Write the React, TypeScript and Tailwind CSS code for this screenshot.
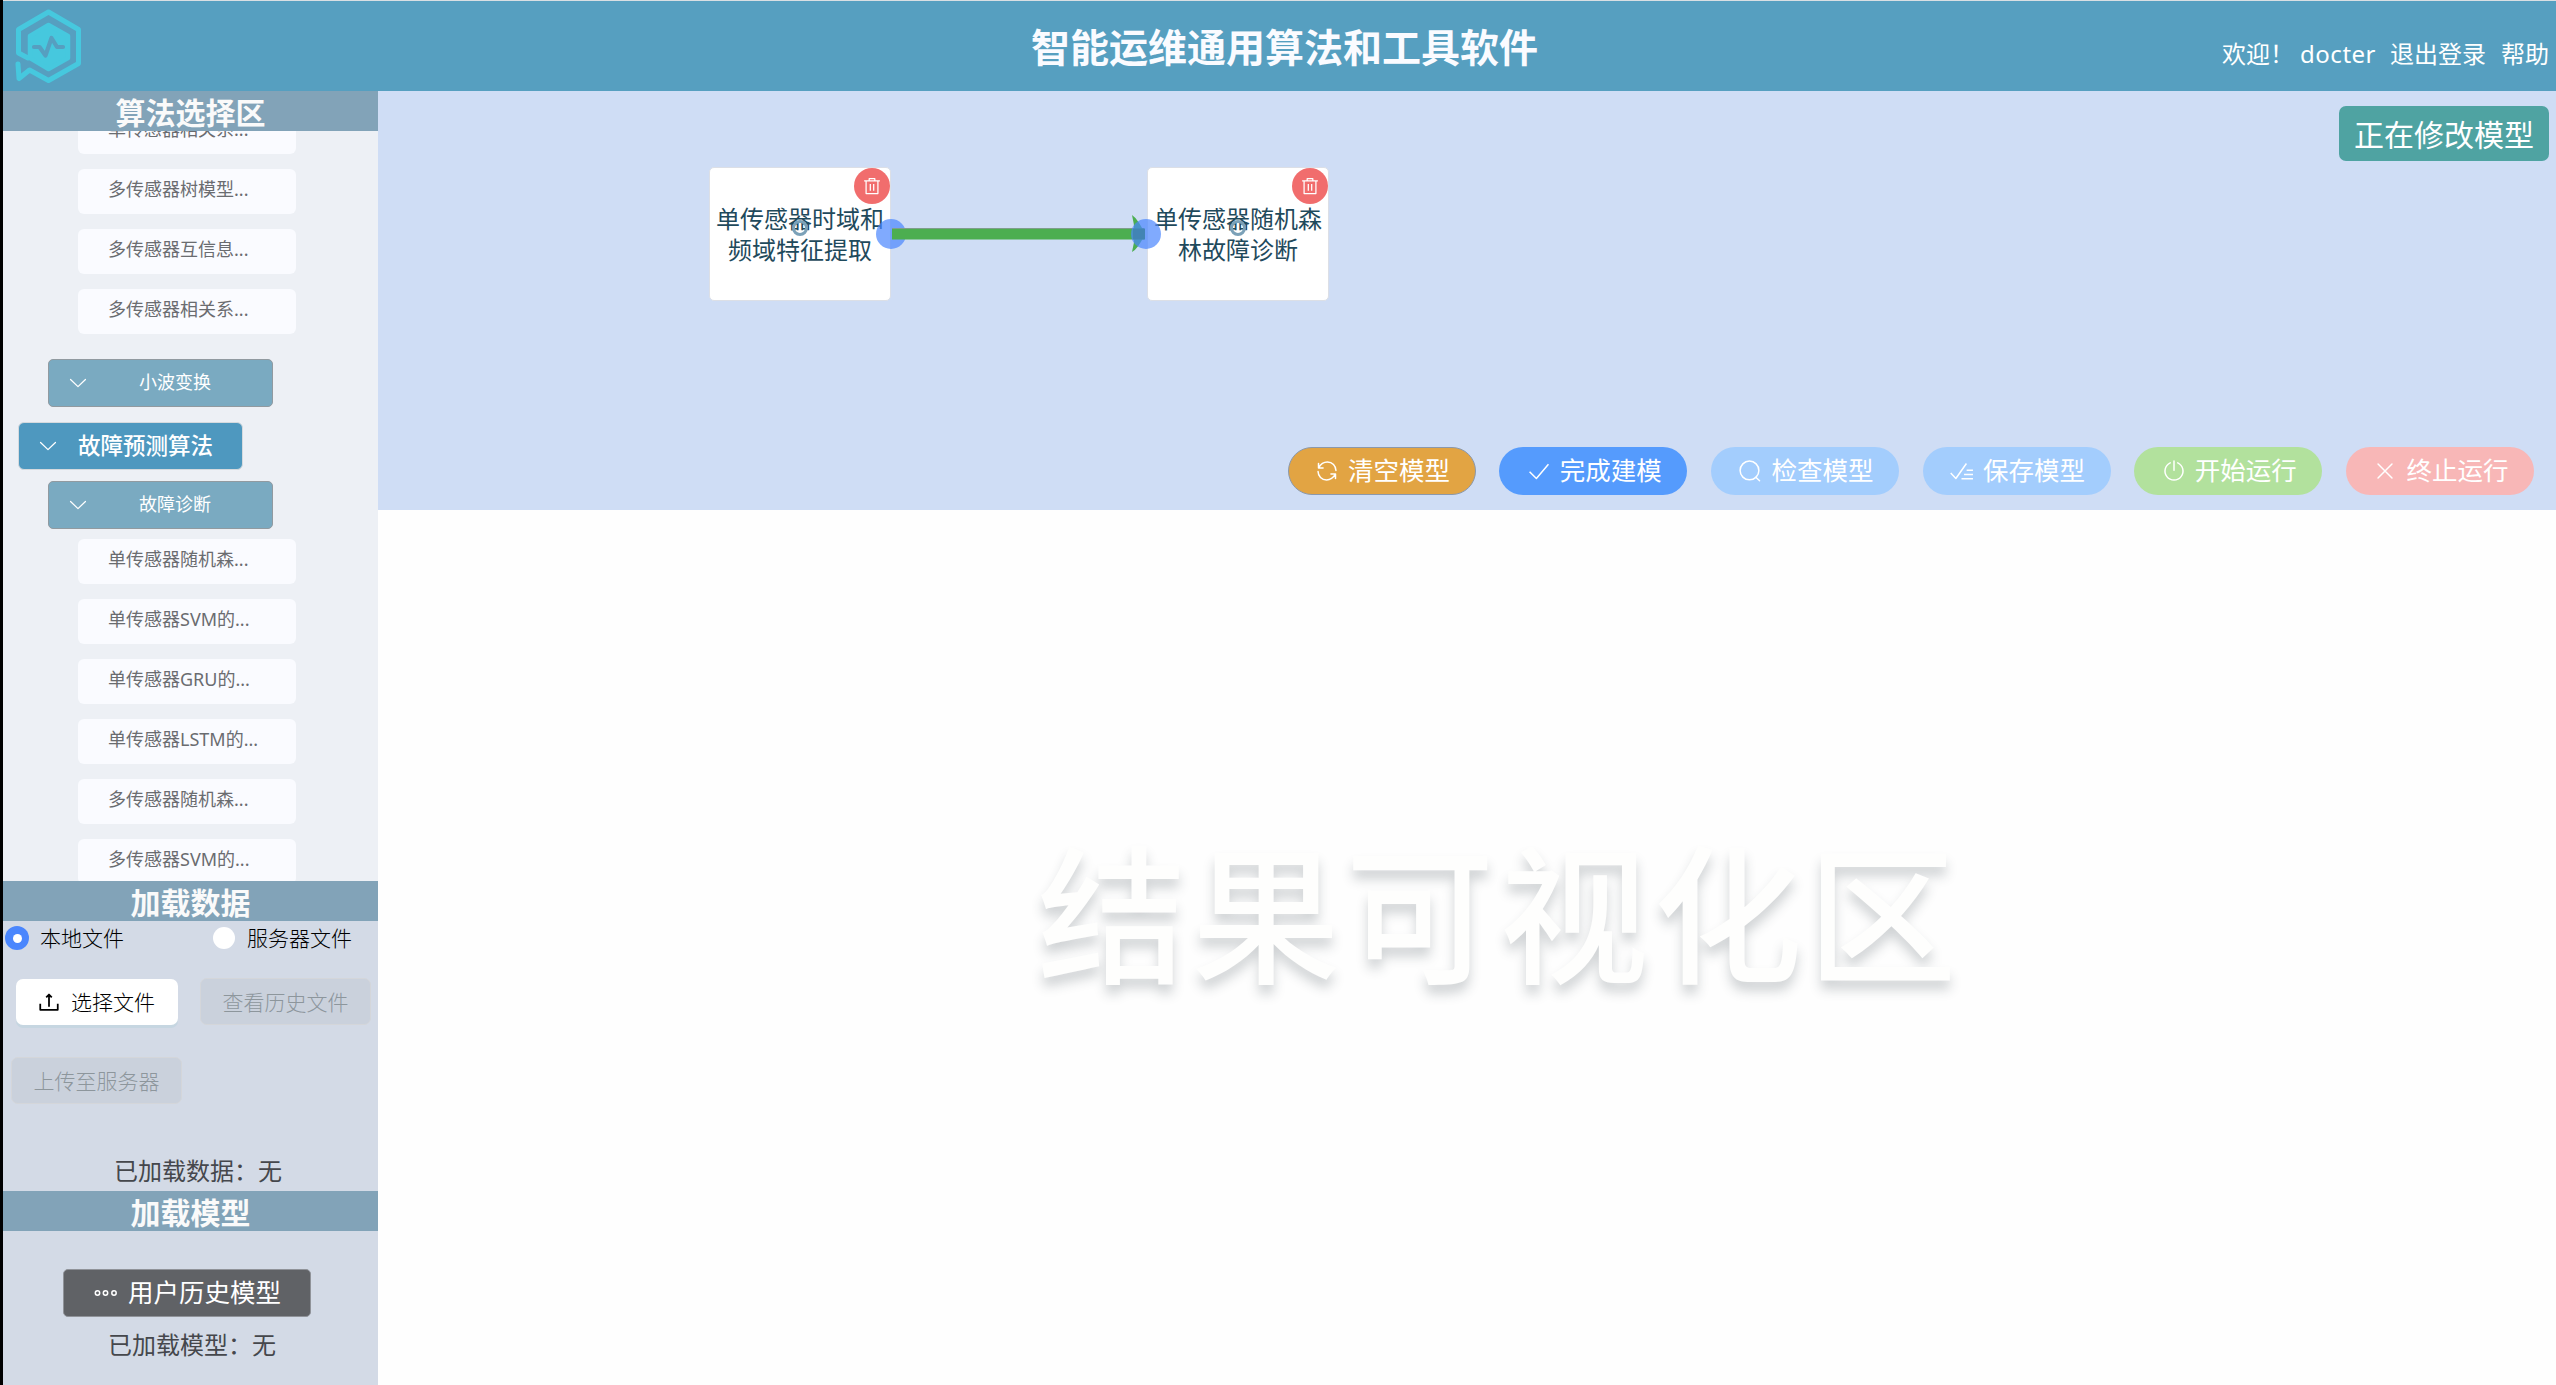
import React from "react";

const Glyph = ({ children, className }: { children: React.ReactNode; className: string }) => (
  <svg viewBox="0 0 1024 1024" fill="none" stroke="currentColor" strokeWidth={64} strokeLinecap="round" strokeLinejoin="round" className={className}>
    {children}
  </svg>
);

const ChevronDown = ({ className }: { className: string }) => (
  <Glyph className={className}><path d="M130 330L512 700L894 330" /></Glyph>
);

const Trash = () => (
  <Glyph className="size-[18px]">
    <path d="M64 224H960M352 224V96H672V224M176 224V944H848V224M416 400V776M608 400V776" strokeLinecap="butt" strokeWidth={72} />
  </Glyph>
);

const icons: Record<string, React.ReactNode> = {
  refresh: (
    <>
      <path d="M150 190V384H344M155 375C240 220 370 130 530 130C740 130 890 290 894 490" />
      <path d="M874 834V640H680M869 649C784 804 654 894 494 894C284 894 134 734 130 534" />
    </>
  ),
  check: <path d="M110 540L400 830L915 225" strokeLinecap="butt" />,
  search: (
    <>
      <circle cx="490" cy="490" r="400" />
      <path d="M760 780L920 930" />
    </>
  ),
  finished: <path d="M30 600L250 830L700 190M710 480H980M600 660H980M490 840H980" strokeLinecap="butt" />,
  power: (
    <>
      <path d="M352 165A384 384 0 1 0 672 165" />
      <path d="M512 80V480" />
    </>
  ),
  close: <path d="M215 215L810 810M810 215L215 810" />,
};

const Logo = () => (
  <svg width="90" height="89" viewBox="3 1 90 89" className="shrink-0" fill="none" strokeLinecap="round" strokeLinejoin="round">
    <path d="M28 58L18.500 53V29.500L48.500 12L78.500 29.500V63.500L48.500 80.500L29.500 70L19 78.500L18 64" stroke="#46c8de" strokeWidth="5" />
    <path d="M48.500 25L68 36V58L48.500 69L30 58V36Z" fill="#46c8de" stroke="#46c8de" strokeWidth="4.500" />
    <path d="M34 47H39.500L45.500 55.500L51.500 38L57 47H63" stroke="#569fc0" strokeWidth="4.200" />
  </svg>
);

const SectionTitle = ({ children }: { children: React.ReactNode }) => (
  <h2 className="z-10 h-[40px] shrink-0 bg-[#82a3b8] text-center text-[30px] leading-[43px] font-bold text-[#fafafa]">{children}</h2>
);

const Algo = ({ children }: { children: React.ReactNode }) => (
  <li className="ml-[75px] h-[45px] w-[218px] shrink-0 rounded-[6px] bg-[#fafbff] pl-[30px] text-[18px] leading-[41px] text-[#6a6c70]">
    {children}
  </li>
);

const SubGroup = ({ children }: { children: React.ReactNode }) => (
  <div className="ml-[45px] flex h-[48px] w-[225px] shrink-0 items-center rounded-[5px] border border-[#919aa0] bg-[#7aaac1] pl-[19px] text-[18px] text-white">
    <ChevronDown className="size-[20px]" />
    <span className="ml-[51px] leading-[46px] -mt-[2px]">{children}</span>
  </div>
);

const Node = ({ lines, className }: { lines: string[]; className: string }) => (
  <div className={"absolute top-[76px] h-[134px] w-[182px] rounded-[5px] border border-[#dcdfe6] bg-white " + className}>
    <div className="-mx-px pt-[35px] text-center text-[24px] leading-[31px] text-[#1f4a5c]">
      {lines.map((l) => (
        <div key={l}>{l}</div>
      ))}
    </div>
    <span className="absolute top-[52px] left-[82px] size-[16px] rounded-full border-[3.500px] border-[#7ba1b8]" />
    <button className="absolute top-0 right-0 flex size-[36px] items-center justify-center rounded-full bg-[#f16d6d] text-white">
      <Trash />
    </button>
  </div>
);

const actions = [
  { icon: "refresh", label: "清空模型", cls: "bg-[#e2a443] border border-[#8b98ab]" },
  { icon: "check", label: "完成建模", cls: "bg-[#559bfd]" },
  { icon: "search", label: "检查模型", cls: "bg-[#a3cdfd]" },
  { icon: "finished", label: "保存模型", cls: "bg-[#a3cdfd]" },
  { icon: "power", label: "开始运行", cls: "bg-[#b2e19d]" },
  { icon: "close", label: "终止运行", cls: "bg-[#f8b7b7]" },
];

const disabledBtn =
  "h-[47px] w-[171px] rounded-[7px] border border-[#d4d6da] bg-[#cad1dc] text-center text-[21px] leading-[47px] font-light text-[#8d969c]";

export default function App() {
  return (
    <div className="flex h-[1385px] w-[2556px] flex-col overflow-hidden border-l-[3px] border-black bg-white font-['Noto_Sans','Noto_Sans_CJK_SC',sans-serif]">
      <header className="grid h-[91px] shrink-0 grid-cols-[1fr_auto_1fr] border-t border-[#d9dfe3] bg-[#569fc0] text-white">
        <Logo />
        <h1 className="-mr-[9px] ml-[1px] text-[39px] leading-[91px] font-bold text-[#fafbff]">智能运维通用算法和工具软件</h1>
        <nav className="flex justify-end pr-[7px] text-[24px] leading-[106px]">
          <span className="mr-[6px]">欢迎！</span>
          <span className="mr-[14px] tracking-[0.500px]">docter</span>
          <span className="mr-[15px]">退出登录</span>
          <span>帮助</span>
        </nav>
      </header>

      <div className="flex min-h-0 flex-1">
        <aside className="flex w-[375px] shrink-0 flex-col bg-[#d3dae6]">
          <SectionTitle>算法选择区</SectionTitle>
          <div className="flex h-[750px] shrink-0 flex-col overflow-hidden bg-[#edf0f5]">
            <ul className="-mt-[22px] flex shrink-0 flex-col gap-[15px]">
              <Algo>单传感器相关系...</Algo>
              <Algo>多传感器树模型...</Algo>
              <Algo>多传感器互信息...</Algo>
              <Algo>多传感器相关系...</Algo>
            </ul>
            <div className="h-[25px] shrink-0" />
            <SubGroup>小波变换</SubGroup>
            <div className="mt-[15px] mb-[11px] ml-[15px] flex h-[48px] w-[225px] shrink-0 items-center rounded-[6px] border border-[#d5dade] bg-[#4e98bf] pl-[19px] text-[22.500px] text-white">
              <ChevronDown className="size-[20px]" />
              <span className="-mt-px ml-[20px] leading-[46px] font-medium">故障预测算法</span>
            </div>
            <SubGroup>故障诊断</SubGroup>
            <ul className="mt-[10px] flex shrink-0 flex-col gap-[15px]">
              <Algo>单传感器随机森...</Algo>
              <Algo>单传感器SVM的...</Algo>
              <Algo>单传感器GRU的...</Algo>
              <Algo>单传感器LSTM的...</Algo>
              <Algo>多传感器随机森...</Algo>
              <Algo>多传感器SVM的...</Algo>
            </ul>
          </div>

          <SectionTitle>加载数据</SectionTitle>
          <div className="flex h-[270px] shrink-0 flex-col">
            <div className="flex h-[34px] items-center pl-[2px] text-[21px] leading-[34px] font-light text-black">
              <span className="flex size-[24px] items-center justify-center rounded-full bg-[#4a86fd]">
                <span className="size-[9px] rounded-full bg-white" />
              </span>
              <span className="ml-[11px] w-[84px]">本地文件</span>
              <span className="ml-[89px] size-[22px] rounded-full bg-white" />
              <span className="ml-[12px]">服务器文件</span>
            </div>
            <div className="mt-[23px] flex pl-[13px]">
              <button className="mt-px flex h-[46px] w-[162px] items-center rounded-[7px] bg-white pl-[23px] text-[21px] font-light text-black shadow-[0_3px_0_#c6d6e1]">
                <Glyph className="size-[20px]">
                  <path d="M64 600V910H960V600M512 760V130M370 280L512 130L654 280" strokeWidth={90} strokeLinecap="butt" />
                </Glyph>
                <span className="ml-[12px] leading-[46px]">选择文件</span>
              </button>
              <div className={"ml-[22px] " + disabledBtn}>查看历史文件</div>
            </div>
            <div className={"mt-[32px] ml-[8px] " + disabledBtn}>上传至服务器</div>
            <p className="mt-[50px] ml-[111px] text-[24px] leading-[34px] text-[#45474c]">已加载数据：无</p>
          </div>

          <SectionTitle>加载模型</SectionTitle>
          <button className="mt-[38px] ml-[60px] flex h-[48px] w-[248px] shrink-0 items-center rounded-[5px] border border-[#909399] bg-[#606266] pl-[30px] text-[25.500px] text-white">
            <svg viewBox="0 0 24 8" className="h-[8px] w-[24px]" fill="none" stroke="currentColor" strokeWidth="1.500">
              <circle cx="3.500" cy="4" r="2.200" />
              <circle cx="11.500" cy="4" r="2.200" />
              <circle cx="20" cy="4" r="2.200" />
            </svg>
            <span className="-mt-[3px] ml-[10px] leading-[44px]">用户历史模型</span>
          </button>
          <p className="mt-[11px] ml-[105px] text-[24px] leading-[34px] text-[#45474c]">已加载模型：无</p>
        </aside>

        <main className="flex flex-1 flex-col">
          <section className="relative flex h-[419px] shrink-0 flex-col items-end justify-between bg-[#cfddf5] pt-[15px] pb-[15px]">
            <div className="mr-[7px] h-[55px] w-[210px] rounded-[7px] bg-[#4fa3a2] text-center text-[30px] leading-[57px] text-white">正在修改模型</div>
            <Node className="left-[331px]" lines={["单传感器时域和", "频域特征提取"]} />
            <Node className="left-[769px]" lines={["单传感器随机森", "林故障诊断"]} />
            <svg width="300" height="50" viewBox="0 0 300 50" className="absolute top-[118px] left-[492px]">
              <circle cx="21" cy="25" r="15" fill="#4a86fd" fillOpacity="0.700" />
              <rect x="22" y="19.500" width="252" height="11" fill="#4cae50" />
              <rect x="22" y="19" width="252" height="1" fill="#7f9e8c" />
              <path d="M262 6Q268 10 275 25Q268 40 262 43Q267 25 262 6Z" fill="#4cae50" />
              <circle cx="276" cy="25" r="15" fill="#4a86fd" fillOpacity="0.700" />
              <path d="M263 19.500H275V30.500H263Z" fill="#4284b4" />
            </svg>
            <div className="mr-[22px] flex gap-[23.700px]">
              {actions.map((a) => (
                <button key={a.label} className={"flex h-[48px] w-[188px] items-center justify-center rounded-full pl-[2px] text-[25.500px] text-white " + a.cls}>
                  <Glyph className="size-[24px]">{icons[a.icon]}</Glyph>
                  <span className="-mt-[3px] ml-[9px] leading-[44px]">{a.label}</span>
                </button>
              ))}
            </div>
          </section>
          <section className="flex flex-1 justify-center bg-[#fefefe] pt-[295px] pl-[65px]">
            <div className="h-[220px] text-[149px] leading-[220px] font-medium tracking-[5px] text-[#fefefd] [text-shadow:0_9px_12px_rgba(40,50,60,0.210)]">结果可视化区</div>
          </section>
        </main>
      </div>
    </div>
  );
}
